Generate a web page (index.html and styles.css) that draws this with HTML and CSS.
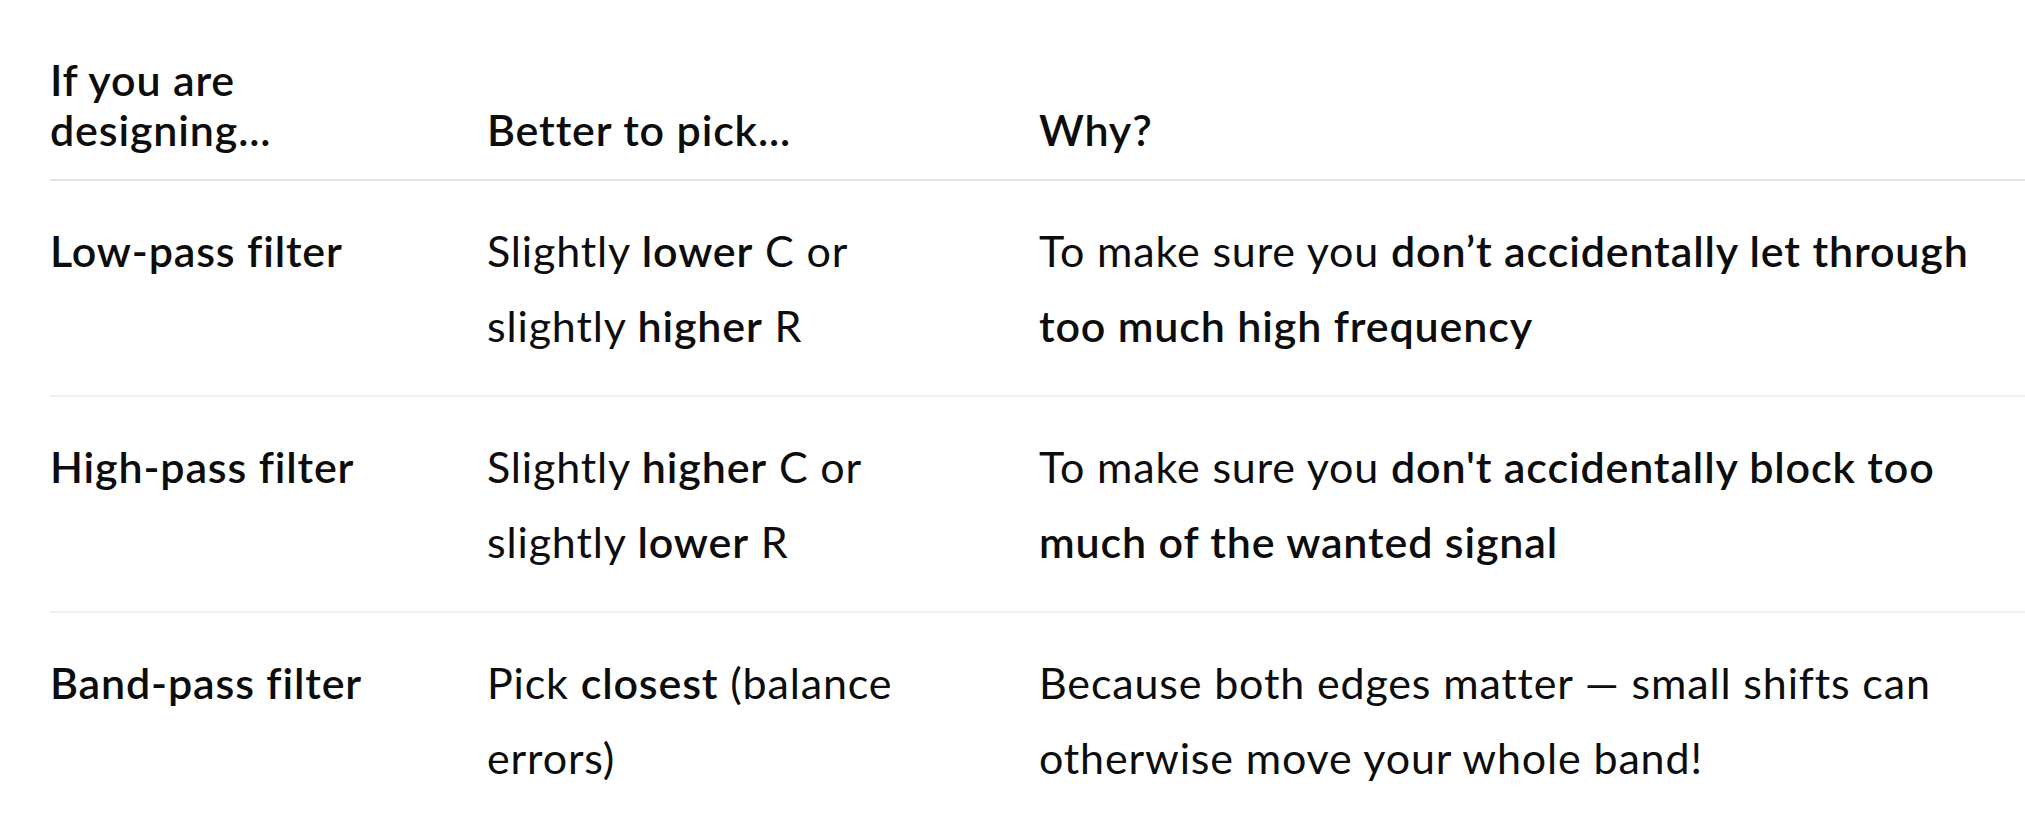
FILE: index.html
```html
<!DOCTYPE html>
<html lang="en">
<head>
<meta charset="utf-8">
<title>Filter component tolerance</title>
<link rel="stylesheet" href="styles.css">
</head>
<body>
<div class="wrap">
  <table class="tbl">
    <colgroup>
      <col class="c1">
      <col class="c2">
      <col class="c3">
    </colgroup>
    <thead>
      <tr>
        <th>If you are designing...</th>
        <th>Better to pick...</th>
        <th>Why?</th>
      </tr>
    </thead>
    <tbody>
      <tr>
        <td><strong>Low-pass filter</strong></td>
        <td>Slightly <strong>lower</strong> C or slightly <strong>higher</strong> R</td>
        <td>To make sure you <strong>don’t accidentally let through too much high frequency</strong></td>
      </tr>
      <tr>
        <td><strong>High-pass filter</strong></td>
        <td>Slightly <strong>higher</strong> C or slightly <strong>lower</strong> R</td>
        <td>To make sure you <strong>don't accidentally block too much of the wanted signal</strong></td>
      </tr>
      <tr>
        <td><strong>Band-pass filter</strong></td>
        <td>Pick <strong>closest</strong> (balance errors)</td>
        <td>Because both edges matter — small shifts can otherwise move your whole band!</td>
      </tr>
    </tbody>
  </table>
</div>
</body>
</html>
```
FILE: styles.css
```css
html, body {
  margin: 0;
  padding: 0;
  background: #ffffff;
}

body {
  overflow: hidden;
  width: 2025px;
  height: 825px;
  font-family: "Lato", "Open Sans", "Noto Sans", sans-serif;
  color: #0d0d0d;
}

.wrap {
  padding: 55px 0 0 50px;
}

.tbl {
  border-collapse: collapse;
  table-layout: fixed;
  width: 2050px;
  font-size: 43px;
  letter-spacing: 0.85px;
}

.c1 { width: 437px; }
.c2 { width: 552px; }
.c3 { width: 1061px; }

.tbl th {
  text-align: left;
  vertical-align: bottom;
  font-weight: 600;
  line-height: 50px;
  padding: 0 96px 24px 0;
  border-bottom: 2px solid #e3e3e3;
}

.tbl td {
  vertical-align: top;
  line-height: 75px;
  padding: 32px 96px 32px 0;
  border-bottom: 2px solid #efefef;
}

.tbl strong {
  font-weight: 600;
}
```
